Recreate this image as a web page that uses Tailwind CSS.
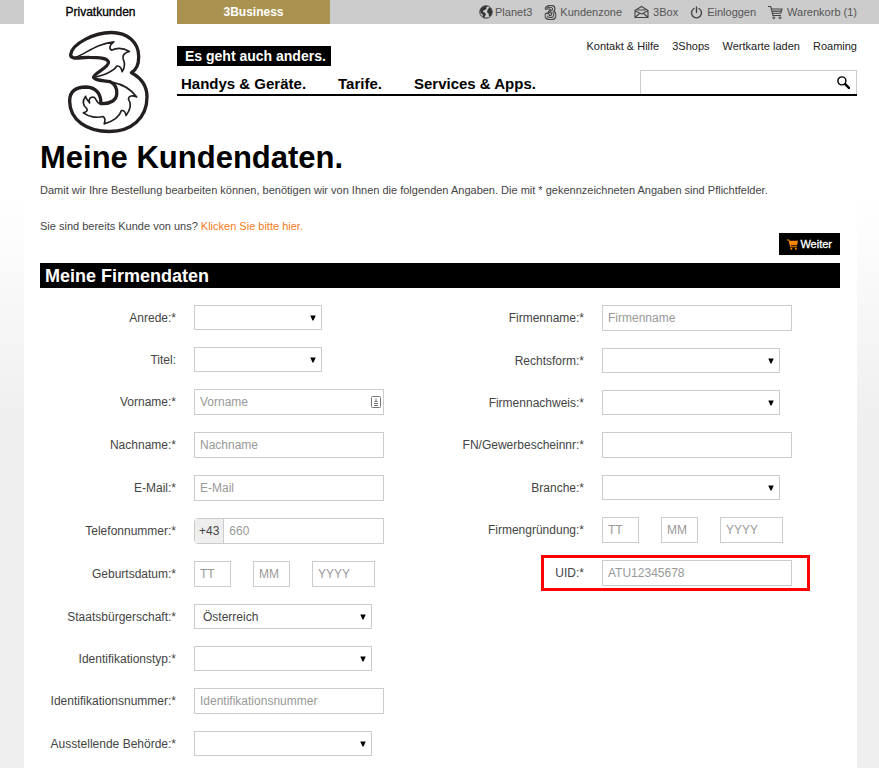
<!DOCTYPE html>
<html lang="de">
  <head>
    <meta charset="UTF-8" />
    <meta name="viewport" content="width=device-width, initial-scale=1.0" />
    <title>Meine Kundendaten</title>
    <script src="https://cdn.jsdelivr.net/npm/@tailwindcss/browser@4"></script>
  </head>
  <body class="min-h-screen bg-[#efefef] bg-linear-to-b from-white from-[200px] to-[#efefef] to-[420px] font-['Liberation_Sans',Arial,sans-serif] text-xs text-[#444]">
    <svg class="hidden">
      <symbol id="three" viewBox="22 14 250 314">
        <path d="M33 88C38 55 105 22 155 22C205 22 238 52 238 95C238 120 228 136 216 143C248 160 263 188 263 216C263 280 215 320 150 320C82 320 30 285 30 228C30 198 50 186 80 186C110 187 125 208 124 236C152 238 172 226 172 204C172 186 166 176 152 170C134 166 108 168 102 157C100 146 148 128 147 112C145 98 115 97 90 97C62 96 32 106 33 88Z" />
      </symbol>
      <symbol id="arrow" viewBox="0 0 6 6"><path d="M.3 .5h5.400L3.500 5.500h-1z" /></symbol>
    </svg>

    <!-- top bar -->
    <div class="flex h-6 bg-[#ccc] pr-[22px] pl-6 leading-6">
      <a href="#" class="w-[153px] bg-white text-center text-black [-webkit-text-stroke:0.3px]">Privatkunden</a>
      <a href="#" class="w-[153px] bg-[#aa9350] text-center font-bold text-white">3Business</a>
      <nav class="flex flex-1 items-center justify-end gap-3 text-[11px] whitespace-nowrap text-[#555]">
        <a href="#" class="flex items-center gap-0.5">
          <svg class="size-[14px]" viewBox="0 0 14 14">
            <circle cx="7" cy="7" r="6.200" fill="#ccc" stroke="#333" />
            <path fill="#333" d="M1 6l1.200-3L5 1.200l3-.2.4 1-1.600.8.8 1-1.800 1.200-1.500.6-.5 1.200 1.700.6 1.500 1.600-.7 1.600-.9 2.200-1.200-.6-.6-2.600-1.400-1.400zM8.800 4.200l1.700-1.700 1.600 1 1 3-.4 2.800-1.500 2-1.300-.3-.3-2.500-1.700-1.400z" />
          </svg>
          Planet3
        </a>
        <a href="#" class="flex items-center gap-[3px]">
          <svg class="h-[15px] w-[13px] fill-none stroke-[#444]" viewBox="22 14 250 314">
            <use href="#three" x="22" y="14" width="250" height="314" stroke-width="26" />
            <path d="M80 68C120 58 175 50 190 90C195 120 165 140 140 150M190 165C230 190 228 240 190 265C150 285 90 280 76 235" stroke-width="22" />
          </svg>
          Kundenzone
        </a>
        <a href="#" class="flex items-center gap-1">
          <svg class="h-[14px] w-[15px] fill-none stroke-[#444]" viewBox="0 0 15 14">
            <path d="M1 5.500L7.500 1.500L14 5.500V12.500H1zM1.500 12l4.500-4M13.500 12L9 8M1.500 6l6 3 6-3M3.500 5h8" stroke-width="1.100" />
          </svg>
          3Box
        </a>
        <a href="#" class="flex items-center gap-1">
          <svg class="size-[13px] fill-none stroke-[#444]" viewBox="0 0 13 13">
            <path d="M4 2.500a5 5 0 1 0 5 0M6.500 1v5.500" stroke-width="1.400" stroke-linecap="round" />
          </svg>
          Einloggen
        </a>
        <a href="#" class="flex items-center gap-1">
          <svg class="size-[15px] fill-none stroke-[#444]" viewBox="0 0 15 15">
            <path d="M0 1.500h2.700L5 10.500h8M3.300 4H14l-1.200 4.300H4.500M4 6.100h9.300" stroke-width="1.100" />
            <circle cx="5.800" cy="12.800" r="1" /><circle cx="12" cy="12.800" r="1" />
          </svg>
          Warenkorb (1)
        </a>
      </nav>
    </div>

    <div class="mr-[22px] ml-6 bg-white pb-3">
      <header class="flex items-start pb-[5px]">
        <a href="#" aria-label="Startseite" class="w-[153px] shrink-0 pt-[5px] pl-[43px]">
          <svg class="h-[106px] w-[83px] fill-none stroke-[#231f20]" viewBox="22 14 250 314" stroke-linejoin="round">
            <use href="#three" x="22" y="14" width="250" height="314" stroke-width="10" />
            <path stroke-width="5" d="M48 97C85 82 110 56 163 50C150 60 148 70 156 75C175 66 195 70 210 79C196 82 188 90 191 101C198 115 196 128 188 140C186 130 180 122 172 123C160 142 130 150 104 157M160 172C190 178 216 194 232 216C218 210 208 213 207 222C218 240 212 256 200 272C198 262 192 256 186 257C180 276 160 290 134 297C138 286 136 278 130 275C112 280 88 276 71 264C80 262 85 257 82 252C70 242 68 228 78 214C80 226 88 228 90 234C86 222 92 215 103 217C112 220 108 234 124 238" />
          </svg>
        </a>
        <div class="flex-1 pt-3">
          <div class="flex h-[30px] justify-between">
            <span class="self-end bg-black pr-[5px] pl-2 text-[14px] leading-5 font-bold text-white">Es geht auch anders.</span>
            <nav class="flex gap-[13px] text-[11px] leading-5 text-[#222]">
              <a href="#">Kontakt &amp; Hilfe</a>
              <a href="#">3Shops</a>
              <a href="#">Wertkarte laden</a>
              <a href="#">Roaming</a>
            </nav>
          </div>
          <div class="mt-1 flex h-[26px] justify-between border-b-2 border-black">
            <nav class="flex gap-8 pl-1 text-[15px] leading-7 font-bold text-black">
              <a href="#">Handys &amp; Geräte.</a>
              <a href="#">Tarife.</a>
              <a href="#">Services &amp; Apps.</a>
            </nav>
            <form class="flex w-[217px] border border-b-0 border-[#ccc]">
              <input type="search" aria-label="Suche" class="min-w-0 flex-1 px-2 outline-none" />
              <button type="button" aria-label="Suchen" class="px-1.5">
                <svg class="size-[13px] fill-none stroke-black" viewBox="0 0 12 12">
                  <circle cx="4.500" cy="4.500" r="3.700" stroke-width="1.300" />
                  <path d="M7.500 7.500l3.500 3.500" stroke-width="2.200" stroke-linecap="round" />
                </svg>
              </button>
            </form>
          </div>
        </div>
      </header>

      <main class="pr-[17px] pl-4">
        <h1 class="text-[31px] leading-9 font-bold text-black">Meine Kundendaten.</h1>
        <p class="mt-1.5 text-[11px] leading-4">Damit wir Ihre Bestellung bearbeiten können, benötigen wir von Ihnen die folgenden Angaben. Die mit * gekennzeichneten Angaben sind Pflichtfelder.</p>
        <div class="mt-5 flex items-start justify-between">
          <p class="text-[11px] leading-4">Sie sind bereits Kunde von uns? <a href="#" class="text-[#f47a20]">Klicken Sie bitte hier.</a></p>
          <button type="submit" form="firma" class="mt-[15px] flex h-[22px] items-center gap-0.5 bg-black px-2 text-[11px] text-white [-webkit-text-stroke:0.3px]">
            <svg class="h-[11px] w-[11px] fill-[#f80]" viewBox="0 0 11 11">
              <path d="M0 .5h2.200l.4 1.300H11L10 6.300H3.800l.2 1H10v1H3.200L1.600 1.500H0z" />
              <circle cx="4.300" cy="9.800" r="1" /><circle cx="8.800" cy="9.800" r="1" />
            </svg>
            Weiter
          </button>
        </div>

        <h2 class="mt-2 h-[25px] bg-black pl-[5px] text-[18px] leading-[26px] font-bold text-white">Meine Firmendaten</h2>

        <form id="firma" class="mt-[17px] grid grid-cols-2 gap-4">
          <div class="flex flex-col gap-[17px]">
            <div class="flex items-center gap-[18px]">
              <label for="anrede" class="w-[136px] shrink-0 text-right">Anrede:*</label>
              <div class="relative w-full max-w-[128px]">
                <select id="anrede" class="block h-[25px] w-full appearance-none border border-[#ccc] bg-white pl-2"><option></option><option>Herr</option><option>Frau</option></select>
                <svg class="pointer-events-none absolute top-2.5 right-1.5 size-1.5"><use href="#arrow" /></svg>
              </div>
            </div>
            <div class="flex items-center gap-[18px]">
              <label for="titel" class="w-[136px] shrink-0 text-right">Titel:</label>
              <div class="relative w-full max-w-[128px]">
                <select id="titel" class="block h-[25px] w-full appearance-none border border-[#ccc] bg-white pl-2"><option></option><option>Dr.</option><option>Mag.</option></select>
                <svg class="pointer-events-none absolute top-2.5 right-1.5 size-1.5"><use href="#arrow" /></svg>
              </div>
            </div>
            <div class="flex items-center gap-[18px]">
              <label for="vorname" class="w-[136px] shrink-0 text-right">Vorname:*</label>
              <div class="relative w-full max-w-[190px]">
                <input id="vorname" type="text" placeholder="Vorname" class="block h-[26px] w-full border border-[#ccc] px-[5px] placeholder:text-[#999]" />
                <svg class="pointer-events-none absolute top-[7px] right-[3px] h-3 w-2.5 fill-none stroke-[#777]" viewBox="0 0 10 12">
                  <rect x=".5" y=".5" width="9" height="11" rx="1" />
                  <path d="M5 2.500v3M3.500 5.500h3M3 7.500h4M3 9.500h4" />
                </svg>
              </div>
            </div>
            <div class="flex items-center gap-[18px]">
              <label for="nachname" class="w-[136px] shrink-0 text-right">Nachname:*</label>
              <input id="nachname" type="text" placeholder="Nachname" class="h-[26px] w-full max-w-[190px] border border-[#ccc] px-[5px] placeholder:text-[#999]" />
            </div>
            <div class="flex items-center gap-[18px]">
              <label for="email" class="w-[136px] shrink-0 text-right">E-Mail:*</label>
              <input id="email" type="email" placeholder="E-Mail" class="h-[26px] w-full max-w-[190px] border border-[#ccc] px-[5px] placeholder:text-[#999]" />
            </div>
            <div class="flex items-center gap-[18px]">
              <label for="telefon" class="w-[136px] shrink-0 text-right">Telefonnummer:*</label>
              <div class="flex h-[26px] w-full max-w-[190px] rounded-l-sm border border-[#ccc]">
                <span class="border-r border-[#ccc] bg-[#eee] px-1 leading-6">+43</span>
                <input id="telefon" type="tel" placeholder="660" class="min-w-0 flex-1 px-[5px] placeholder:text-[#999]" />
              </div>
            </div>
            <div class="flex items-center gap-[18px]">
              <label for="geb-tag" class="w-[136px] shrink-0 text-right">Geburtsdatum:*</label>
              <div class="flex gap-[22px]">
                <input id="geb-tag" type="text" placeholder="TT" class="h-[26px] w-[37px] border border-[#ccc] px-[5px] placeholder:text-[#999]" />
                <input type="text" aria-label="Geburtsmonat" placeholder="MM" class="h-[26px] w-[37px] border border-[#ccc] px-[5px] placeholder:text-[#999]" />
                <input type="text" aria-label="Geburtsjahr" placeholder="YYYY" class="h-[26px] w-[63px] border border-[#ccc] px-[5px] placeholder:text-[#999]" />
              </div>
            </div>
            <div class="flex items-center gap-[18px]">
              <label for="staat" class="w-[136px] shrink-0 text-right">Staatsbürgerschaft:*</label>
              <div class="relative w-full max-w-[178px]">
                <select id="staat" class="block h-[25px] w-full appearance-none border border-[#ccc] bg-white pl-2"><option>Österreich</option></select>
                <svg class="pointer-events-none absolute top-2.5 right-1.5 size-1.5"><use href="#arrow" /></svg>
              </div>
            </div>
            <div class="flex items-center gap-[18px]">
              <label for="idtyp" class="w-[136px] shrink-0 text-right">Identifikationstyp:*</label>
              <div class="relative w-full max-w-[178px]">
                <select id="idtyp" class="block h-[25px] w-full appearance-none border border-[#ccc] bg-white pl-2"><option></option><option>Reisepass</option></select>
                <svg class="pointer-events-none absolute top-2.5 right-1.5 size-1.5"><use href="#arrow" /></svg>
              </div>
            </div>
            <div class="flex items-center gap-[18px]">
              <label for="idnr" class="w-[136px] shrink-0 text-right">Identifikationsnummer:*</label>
              <input id="idnr" type="text" placeholder="Identifikationsnummer" class="h-[26px] w-full max-w-[190px] border border-[#ccc] px-[5px] placeholder:text-[#999]" />
            </div>
            <div class="flex items-center gap-[18px]">
              <label for="behoerde" class="w-[136px] shrink-0 text-right">Ausstellende Behörde:*</label>
              <div class="relative w-full max-w-[178px]">
                <select id="behoerde" class="block h-[25px] w-full appearance-none border border-[#ccc] bg-white pl-2"><option></option></select>
                <svg class="pointer-events-none absolute top-2.5 right-1.5 size-1.5"><use href="#arrow" /></svg>
              </div>
            </div>
          </div>

          <div class="flex flex-col gap-[17px]">
            <div class="flex items-center gap-[18px]">
              <label for="firmenname" class="w-[136px] shrink-0 text-right">Firmenname:*</label>
              <input id="firmenname" type="text" placeholder="Firmenname" class="h-[26px] w-full max-w-[190px] border border-[#ccc] px-[5px] placeholder:text-[#999]" />
            </div>
            <div class="flex items-center gap-[18px]">
              <label for="rechtsform" class="w-[136px] shrink-0 text-right">Rechtsform:*</label>
              <div class="relative w-full max-w-[178px]">
                <select id="rechtsform" class="block h-[25px] w-full appearance-none border border-[#ccc] bg-white pl-2"><option></option></select>
                <svg class="pointer-events-none absolute top-2.5 right-1.5 size-1.5"><use href="#arrow" /></svg>
              </div>
            </div>
            <div class="flex items-center gap-[18px]">
              <label for="nachweis" class="w-[136px] shrink-0 text-right">Firmennachweis:*</label>
              <div class="relative w-full max-w-[178px]">
                <select id="nachweis" class="block h-[25px] w-full appearance-none border border-[#ccc] bg-white pl-2"><option></option></select>
                <svg class="pointer-events-none absolute top-2.5 right-1.5 size-1.5"><use href="#arrow" /></svg>
              </div>
            </div>
            <div class="flex items-center gap-[18px]">
              <label for="fnnr" class="w-[136px] shrink-0 text-right">FN/Gewerbescheinnr:*</label>
              <input id="fnnr" type="text" class="h-[26px] w-full max-w-[190px] border border-[#ccc] px-[5px]" />
            </div>
            <div class="flex items-center gap-[18px]">
              <label for="branche" class="w-[136px] shrink-0 text-right">Branche:*</label>
              <div class="relative w-full max-w-[178px]">
                <select id="branche" class="block h-[25px] w-full appearance-none border border-[#ccc] bg-white pl-2"><option></option></select>
                <svg class="pointer-events-none absolute top-2.5 right-1.5 size-1.5"><use href="#arrow" /></svg>
              </div>
            </div>
            <div class="flex items-center gap-[18px]">
              <label for="gr-tag" class="w-[136px] shrink-0 text-right">Firmengründung:*</label>
              <div class="flex gap-[22px]">
                <input id="gr-tag" type="text" placeholder="TT" class="h-[26px] w-[37px] border border-[#ccc] px-[5px] placeholder:text-[#999]" />
                <input type="text" aria-label="Gründungsmonat" placeholder="MM" class="h-[26px] w-[37px] border border-[#ccc] px-[5px] placeholder:text-[#999]" />
                <input type="text" aria-label="Gründungsjahr" placeholder="YYYY" class="h-[26px] w-[63px] border border-[#ccc] px-[5px] placeholder:text-[#999]" />
              </div>
            </div>
            <div class="relative flex items-center gap-[18px]">
              <label for="uid" class="w-[136px] shrink-0 text-right">UID:*</label>
              <input id="uid" type="text" placeholder="ATU12345678" class="h-[26px] w-full max-w-[190px] border border-[#ccc] px-[5px] placeholder:text-[#999]" />
              <!-- highlight -->
              <div class="pointer-events-none absolute -inset-y-[5px] right-[30px] left-[93px] border-3 border-[#f00]"></div>
            </div>
          </div>
        </form>
      </main>
    </div>
  </body>
</html>
